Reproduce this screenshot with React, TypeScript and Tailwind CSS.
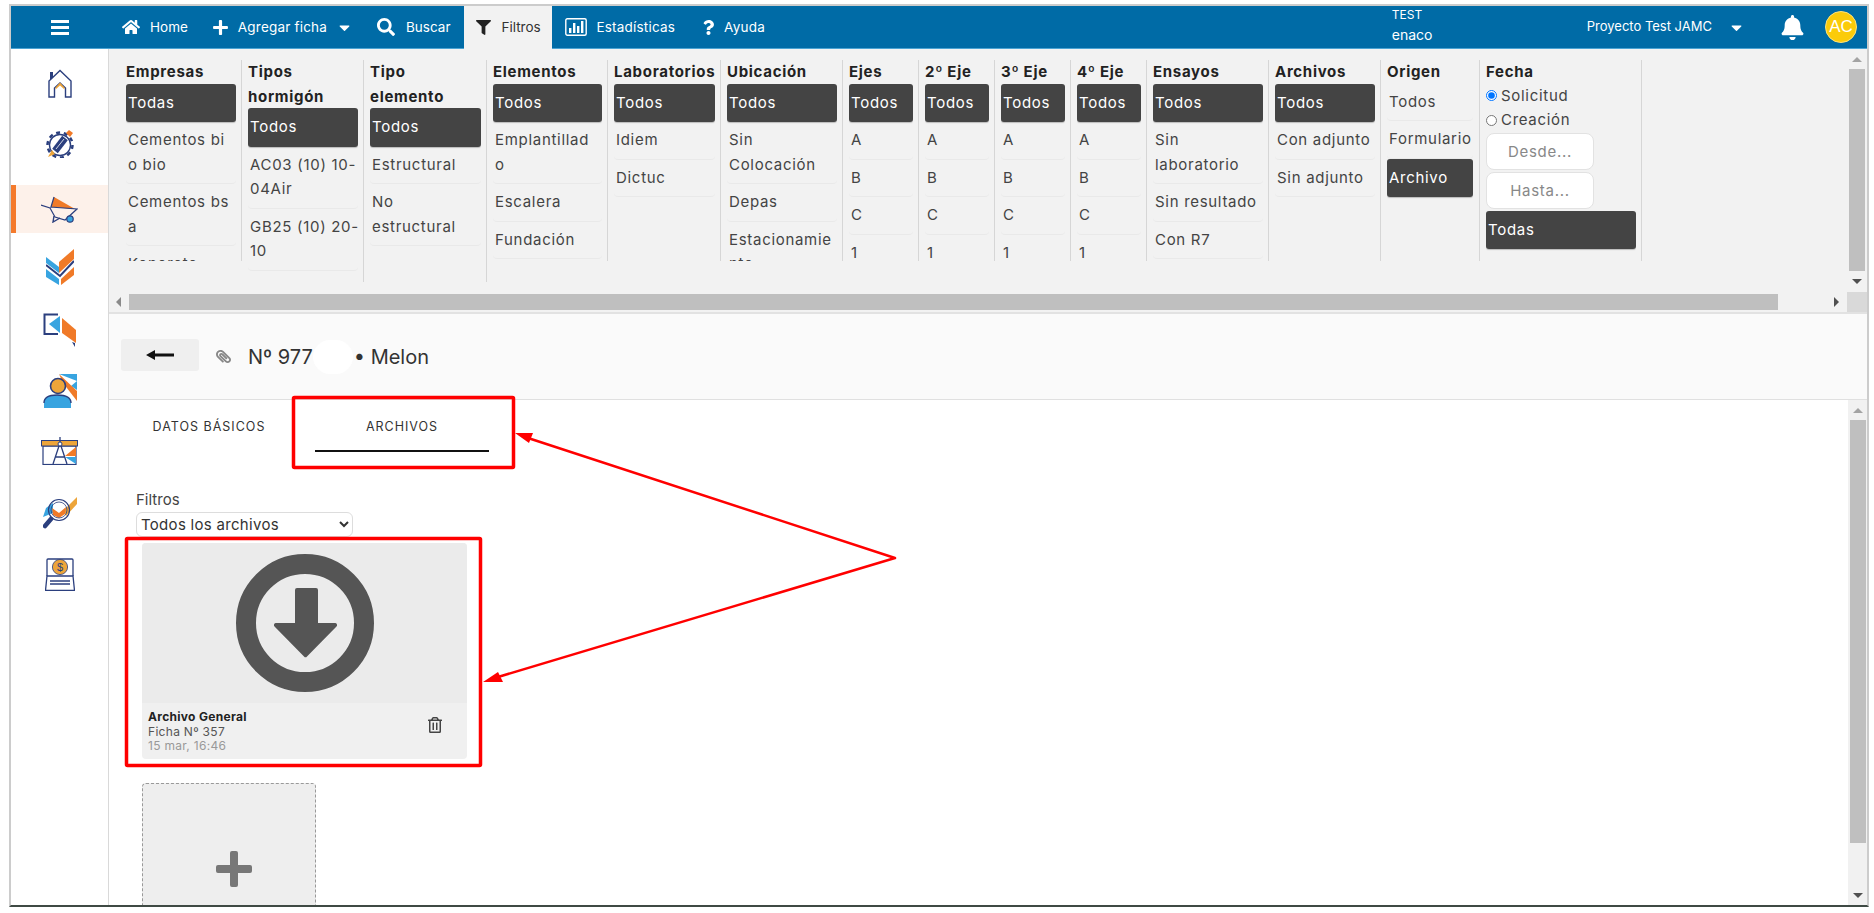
import {
  FaBell,
  FaCaretDown,
  FaFilter,
  FaHome,
  FaPaperclip,
  FaPlus,
  FaQuestion,
  FaRegTrashAlt,
  FaSearch,
} from "react-icons/fa";

const navy = "#2b3f7e";
const orange = "#f07a28";
const sky = "#38a4e0";
const amber = "#eda53a";

function HomeIcon() {
  return (
    <svg width="26" height="29" viewBox="0 0 26 29" fill="none">
      <rect x="3" y="3" width="3" height="7" fill={navy} />
      <path d="M2 28V12L13 1.5L24 12V28H18.5V19L13 14L7.5 19V28Z" stroke={navy} strokeWidth="1.4" fill="#fff" />
      <path d="M8.5 18.5L13 13.5L17.5 18.5V20.5L13 16.5L8.5 20.5Z" fill={amber} />
    </svg>
  );
}

function GearIcon() {
  return (
    <svg width="28" height="28" viewBox="0 0 28 28" fill="none">
      <circle cx="14" cy="15" r="10.5" stroke={navy} strokeWidth="1.4" />
      <circle cx="14" cy="15" r="12.5" stroke={navy} strokeWidth="2.5" strokeDasharray="4 3.8" />
      <path d="M9 21L19 8" stroke={navy} strokeWidth="7" />
      <path d="M10 19L18 9" stroke="#fff" strokeWidth="0.8" />
      <path d="M20 3L23 0L27 3L24 7Z" fill={orange} />
      <path d="M2 27L6 20L9 24Z" fill={amber} />
    </svg>
  );
}

function BarrowIcon() {
  return (
    <svg width="37" height="27" viewBox="0 0 37 27" fill="none">
      <path d="M13 1L34 13L10 11Z" fill={orange} />
      <path d="M0 9L9 12L14 21L24 24L36 13L10 11L13 1" stroke={navy} strokeWidth="1.2" />
      <path d="M13 20L12 26L19 22" stroke={navy} strokeWidth="1.4" />
      <circle cx="29" cy="23" r="3.2" fill={sky} stroke={navy} strokeWidth="1.2" />
    </svg>
  );
}

function ChevronsIcon() {
  return (
    <svg width="28" height="36" viewBox="0 0 28 36" fill="none">
      <path d="M0 8L13 18V24L0 14Z" fill={sky} />
      <path d="M13 13L28 0V10L13 24Z" fill={orange} />
      <path d="M0 16L14 27L28 12" stroke={navy} strokeWidth="2" />
      <path d="M0 20L13 30V36L0 28Z" fill={sky} />
      <path d="M15 30L28 18V26L15 36Z" fill={orange} />
    </svg>
  );
}

function ExportIcon() {
  return (
    <svg width="33" height="34" viewBox="0 0 33 34" fill="none">
      <path d="M15 1.5H1.5V21H15" stroke={navy} strokeWidth="2" />
      <path d="M6 11L17 3V20Z" fill={sky} />
      <path d="M19 5L33 17V30L19 20Z" fill={orange} />
      <path d="M29 29L32 30V34Z" fill={navy} />
    </svg>
  );
}

function PersonIcon() {
  return (
    <svg width="34" height="35" viewBox="0 0 34 35" fill="none">
      <path d="M16 1H34V8L28 13L34 17V8Z" fill={sky} />
      <path d="M16 1L34 18V28L20 10Z" fill={orange} />
      <circle cx="15" cy="13" r="7.5" fill={amber} stroke={navy} strokeWidth="1.6" />
      <path d="M1 35V30C1 24 6 22 14 22C22 22 28 24 28 30V35Z" fill={sky} />
      <path d="M1 30C1 24 6 22 14 22C22 22 28 24 28 30" stroke={navy} strokeWidth="1.4" />
    </svg>
  );
}

function DraftingIcon() {
  return (
    <svg width="37" height="28" viewBox="0 0 37 28" fill="none">
      <rect x="2" y="9" width="33" height="18.5" stroke={navy} strokeWidth="1.2" fill="#fff" />
      <path d="M35 10L24 19H35Z" fill={orange} />
      <path d="M24 20L35 27V20Z" fill={sky} />
      <rect x="0.5" y="3.5" width="36" height="5.5" fill={amber} stroke={navy} strokeWidth="1" />
      <path d="M19 0V7M19 6L12 27M19 6L26 27M14 20H24" stroke={navy} strokeWidth="1.3" />
      <circle cx="19" cy="7" r="2" fill="#fff" stroke={navy} />
    </svg>
  );
}

function InspectIcon() {
  return (
    <svg width="34" height="32" viewBox="0 0 34 32" fill="none">
      <path d="M0 20L3 11L10 6V16Z" fill={sky} />
      <path d="M21 13L34 0V7L23 19Z" fill={amber} />
      <path d="M9 11L16 16L23 10L22 17L16 21L10 18Z" fill={orange} />
      <circle cx="16" cy="13" r="10.5" stroke={navy} strokeWidth="1.2" />
      <circle cx="16" cy="13" r="8" stroke={navy} strokeWidth="0.8" />
      <path d="M8 22L2 29" stroke={navy} strokeWidth="4.5" strokeLinecap="round" />
    </svg>
  );
}

function InvoiceIcon() {
  return (
    <svg width="30" height="33" viewBox="0 0 30 33" fill="none">
      <path d="M2 18V2C2 1 3 1 3 1H27C28 1 28 2 28 2V18" stroke={navy} strokeWidth="1.3" />
      <circle cx="15" cy="9" r="7.6" fill={amber} stroke={navy} strokeWidth="0.8" />
      <text x="15" y="13" textAnchor="middle" fontSize="11" fill={navy} fontFamily="'Liberation Sans', sans-serif">
        $
      </text>
      <path d="M2 18H28L29.5 32.5H0.5Z" stroke={navy} strokeWidth="1.3" fill="#fff" />
      <path d="M5 23H25M5 26H25" stroke={navy} strokeWidth="1.4" />
    </svg>
  );
}

function ChartBoxIcon() {
  return (
    <svg width="22" height="18" viewBox="0 0 22 18" fill="none">
      <rect x="0.8" y="0.8" width="20.4" height="16.4" rx="1.5" stroke="#fff" strokeWidth="1.4" />
      <path d="M4 10h2.4v5H4zM8 5h2.4v10H8zM12 8h2.4v7H12zM16 3h2.4v12H16z" fill="#fff" />
    </svg>
  );
}

const sideItems = [
  { icon: <HomeIcon />, mt: "mt-[10px]", active: false },
  { icon: <GearIcon />, mt: "mt-[13px]", active: false },
  { icon: <BarrowIcon />, mt: "mt-[17px]", active: true },
  { icon: <ChevronsIcon />, mt: "mt-[10px]", active: false },
  { icon: <ExportIcon />, mt: "mt-[15px]", active: false },
  { icon: <PersonIcon />, mt: "mt-[12px]", active: false },
  { icon: <DraftingIcon />, mt: "mt-[13px]", active: false },
  { icon: <InspectIcon />, mt: "mt-[14px]", active: false },
  { icon: <InvoiceIcon />, mt: "mt-[13px]", active: false },
];

const eje = ["Todos", "A", "B", "C", "1"];

const columns = [
  { title: "Empresas", width: "w-[122px]", items: ["Todas", "Cementos bi\no bio", "Cementos bs\na", "Konorete"] },
  { title: "Tipos\nhormigón", width: "w-[122px]", items: ["Todos", "AC03 (10) 10-\n04Air", "GB25 (10) 20-\n10", "G025 (90)"] },
  { title: "Tipo\nelemento", width: "w-[123px]", items: ["Todos", "Estructural", "No\nestructural"] },
  { title: "Elementos", width: "w-[121px]", items: ["Todos", "Emplantillad\no", "Escalera", "Fundación"] },
  { title: "Laboratorios", width: "w-[113px]", items: ["Todos", "Idiem", "Dictuc"] },
  { title: "Ubicación", width: "w-[122px]", items: ["Todos", "Sin\nColocación", "Depas", "Estacionamie\nnto"] },
  { title: "Ejes", width: "w-[76px]", items: eje },
  { title: "2º Eje", width: "w-[76px]", items: eje },
  { title: "3º Eje", width: "w-[76px]", items: eje },
  { title: "4º Eje", width: "w-[76px]", items: eje },
  { title: "Ensayos", width: "w-[122px]", items: ["Todos", "Sin\nlaboratorio", "Sin resultado", "Con R7"] },
  { title: "Archivos", width: "w-[112px]", items: ["Todos", "Con adjunto", "Sin adjunto"] },
];

function FilterItem({ label, active }: { label: string; active: boolean }) {
  if (active) {
    return (
      <div className="bg-[#444444] text-white rounded-[3px] px-[2px] py-[7px] whitespace-pre shadow-[0_1px_1px_#bbb]">
        {label}
      </div>
    );
  }
  return <div className="px-[2px] py-[6px] whitespace-pre border-b border-[#e9e9e9] rounded-b-[4px]">{label}</div>;
}

function FilterColumn({ title, width, items }: { title: string; width: string; items: string[] }) {
  const tall = title.includes("\n");
  return (
    <div className={`${width} shrink-0 border-r border-[#d6d6d6] pl-[6px] pr-[5px]`}>
      <div className="font-bold text-[#222] whitespace-pre -mb-px">{title}</div>
      <div className={`overflow-hidden ${tall ? "h-[174px]" : "h-[177px]"}`}>
        {items.map((item, i) => (
          <FilterItem key={item} label={item} active={i === 0} />
        ))}
      </div>
    </div>
  );
}

function OrigenColumn() {
  return (
    <div className="w-[99px] shrink-0 border-r border-[#d6d6d6] pl-[6px] pr-[6px]">
      <div className="font-bold text-[#222] -mb-px">Origen</div>
      <div className="h-[177px] overflow-hidden">
        <FilterItem label="Todos" active={false} />
        <FilterItem label="Formulario" active={false} />
        <FilterItem label="Archivo" active={true} />
      </div>
    </div>
  );
}

function FechaColumn() {
  return (
    <div className="w-[162px] shrink-0 border-r border-[#d6d6d6] pl-[6px] pr-[5px]">
      <div className="font-bold text-[#222] -mb-px">Fecha</div>
      <div className="h-[177px] overflow-hidden">
        <label className="flex items-center gap-[4px]">
          <input type="radio" name="fecha" defaultChecked className="w-[11px] h-[11px] m-0" />
          Solicitud
        </label>
        <label className="flex items-center gap-[4px]">
          <input type="radio" name="fecha" className="w-[11px] h-[11px] m-0" />
          Creación
        </label>
        <input
          placeholder="Desde..."
          className="block w-[108px] h-[37px] bg-white rounded-lg border border-[#e2e2e2] text-center placeholder:text-[#888] mb-[2px]"
        />
        <input
          placeholder="Hasta..."
          className="block w-[108px] h-[37px] bg-white rounded-lg border border-[#e2e2e2] text-center placeholder:text-[#888] mb-[2px]"
        />
        <FilterItem label="Todas" active={true} />
      </div>
    </div>
  );
}

function ArrowUp({ color }: { color: string }) {
  return <div className={`w-0 h-0 border-x-[5px] border-x-transparent border-b-[5px] ${color}`} />;
}

function ArrowDown() {
  return <div className="w-0 h-0 border-x-[5px] border-x-transparent border-t-[5px] border-t-[#505050]" />;
}

function Nav() {
  return (
    <header className="h-[43px] shrink-0 bg-[#006ba6] border-b border-[#4ba3d3] flex items-stretch text-white text-[13.500px]">
      <div className="w-[98px] shrink-0 flex flex-col items-center justify-center gap-[3px]">
        <span className="w-[18px] h-[3px] bg-white" />
        <span className="w-[18px] h-[3px] bg-white" />
        <span className="w-[18px] h-[3px] bg-white" />
      </div>
      <div className="ml-[13px] flex items-center gap-[10px]">
        <FaHome className="text-[18px]" />
        <span>Home</span>
      </div>
      <div className="ml-[24px] flex items-center gap-[9px]">
        <FaPlus className="text-[17px]" />
        <span className="tracking-[0.2px]">Agregar ficha</span>
        <FaCaretDown className="text-[17px]" />
      </div>
      <div className="ml-[24px] flex items-center gap-[11px]">
        <FaSearch className="text-[18px]" />
        <span>Buscar</span>
      </div>
      <div className="ml-[14px] w-[88px] bg-[#f2f2f2] text-[#333] flex items-center pl-[12px] gap-[10px] -mb-px">
        <FaFilter className="text-[15px] text-[#222]" />
        <span>Filtros</span>
      </div>
      <div className="ml-[13px] flex items-center gap-[9px]">
        <ChartBoxIcon />
        <span className="tracking-[0.2px]">Estadísticas</span>
      </div>
      <div className="ml-[26px] flex items-center gap-[8px]">
        <FaQuestion className="text-[15px]" />
        <span className="tracking-[0.2px]">Ayuda</span>
      </div>
      <div className="ml-auto flex items-center pr-[10px]">
        <div className="leading-[20px] -mt-[4px] w-[195px]">
          <div className="text-[12px]">TEST</div>
          <div className="text-[14px]">enaco</div>
        </div>
        <span className="text-[13px]">Proyecto Test JAMC</span>
        <FaCaretDown className="ml-[16px] text-[17px]" />
        <FaBell className="ml-[35px] text-[25px]" />
        <div className="ml-[20px] w-[32px] h-[32px] rounded-full bg-[#fbcb0a] border border-[#ffe27a] flex items-center justify-center text-[17px] font-['Liberation_Sans',sans-serif]">
          AC
        </div>
      </div>
    </header>
  );
}

function Sidebar() {
  return (
    <aside className="w-[98px] shrink-0 border-r border-[#d9d9d9] bg-white">
      {sideItems.map((item, i) => (
        <div
          key={i}
          className={`h-[48px] flex items-center justify-center ${item.mt} ${
            item.active ? "bg-[#fdf1ea] border-l-[5px] border-[#f47a2c] pr-[5px]" : ""
          }`}
        >
          {item.icon}
        </div>
      ))}
    </aside>
  );
}

function FilterPanel() {
  return (
    <section className="shrink-0 bg-[#f2f2f2] border-b-2 border-[#e2e2e2] text-[15px] tracking-[0.7px] leading-[24.500px] text-[#444]">
      <div className="flex h-[243px]">
        <div className="flex-1 min-w-0 flex items-start pt-[11px] pl-[11px] overflow-hidden">
          {columns.map((col) => (
            <FilterColumn key={col.title} {...col} />
          ))}
          <OrigenColumn />
          <FechaColumn />
        </div>
        <div className="w-[20px] shrink-0 flex flex-col items-center">
          <div className="h-[20px] flex items-center">
            <ArrowUp color="border-b-[#a3a3a3]" />
          </div>
          <div className="w-[16px] h-[202px] bg-[#bfbfbf]" />
          <div className="flex-1 flex items-center">
            <ArrowDown />
          </div>
        </div>
      </div>
      <div className="flex h-[20px]">
        <div className="w-[20px] shrink-0 flex items-center pl-[7px]">
          <div className="w-0 h-0 border-y-[5px] border-y-transparent border-r-[5px] border-r-[#8a8a8a]" />
        </div>
        <div className="w-[1649px] my-[2px] bg-[#bfbfbf]" />
        <div className="flex-1 flex items-center justify-end pr-[8px]">
          <div className="w-0 h-0 border-y-[5px] border-y-transparent border-l-[5px] border-l-[#505050]" />
        </div>
        <div className="w-[20px] shrink-0 bg-[#d9d9d9]" />
      </div>
    </section>
  );
}

function TitleBar() {
  return (
    <div className="h-[86px] shrink-0 bg-[#fafafa] border-b border-[#e0e0e0] flex items-center pl-[12px] text-[20px] text-[#333]">
      <button className="w-[78px] h-[32px] bg-[#efefef] rounded-[3px] flex items-center justify-center -mt-[4px]">
        <svg width="28" height="10" viewBox="0 0 28 10">
          <path d="M0 5L9 0V3.5H28V6.5H9V10Z" fill="#111" />
        </svg>
      </button>
      <FaPaperclip className="ml-[17px] text-[15px] text-[#888] rotate-90 -mt-[1px]" />
      <span className="ml-[17px]">Nº 977</span>
      <span className="w-[40px] h-[34px] rounded-full bg-white" />
      <span className="ml-[1px]">• Melon</span>
    </div>
  );
}

function DownloadGlyph() {
  return (
    <svg width="140" height="140" viewBox="0 0 140 140">
      <circle cx="70" cy="70" r="59" fill="none" stroke="#555555" strokeWidth="20" />
      <path d="M60 37a2 2 0 0 1 2-2h19a2 2 0 0 1 2 2v33h17a2 2 0 0 1 1.5 3.4L72 103.500a2 2 0 0 1-3 0L39.500 73.400A2 2 0 0 1 41 70h19Z" fill="#555555" />
    </svg>
  );
}

function Body() {
  return (
    <div className="flex-1 min-h-0 flex bg-white">
      <div className="flex-1 min-w-0 overflow-hidden">
        <div className="flex pl-[13px] gap-[19px] text-[12.500px] tracking-[1px] text-[#333]">
          <div className="w-[174px] h-[52px] pt-[18px] text-center">DATOS BÁSICOS</div>
          <div className="w-[174px] h-[52px] pt-[18px] text-center border-b-2 border-[#111]">ARCHIVOS</div>
        </div>
        <div className="pl-[27px] mt-[36px] text-[15px] leading-[24px] text-[#444]">Filtros</div>
        <select className="block ml-[27px] w-[217px] h-[25px] rounded-md border border-[#ddd] bg-white text-[15px] tracking-[0.3px] text-[#333]">
          <option>Todos los archivos</option>
        </select>
        <div className="ml-[33px] mt-[6px] w-[325px] rounded-[4px] overflow-hidden bg-[#f0f0f0]">
          <div className="h-[160px] bg-[#ebebeb] flex items-center justify-center">
            <DownloadGlyph />
          </div>
          <div className="h-[56px] pl-[6px] pr-[24px] pt-[7px] flex justify-between">
            <div className="text-[12px] tracking-[0.3px] leading-[14.500px]">
              <div className="font-bold text-[#222]">Archivo General</div>
              <div className="text-[#555]">Ficha Nº 357</div>
              <div className="text-[#999]">15 mar, 16:46</div>
            </div>
            <FaRegTrashAlt className="text-[16px] text-[#444] mt-[7px]" />
          </div>
        </div>
        <div className="ml-[33px] mt-[24px] w-[174px] h-[172px] rounded-[4px] border border-dashed border-[#999] bg-[#eeeeee] flex items-center justify-center pl-[9px]">
          <svg width="36" height="36" viewBox="0 0 36 36">
            <path d="M14 2a2 2 0 0 1 2-2h4a2 2 0 0 1 2 2v12h12a2 2 0 0 1 2 2v4a2 2 0 0 1-2 2H22v12a2 2 0 0 1-2 2h-4a2 2 0 0 1-2-2V22H2a2 2 0 0 1-2-2v-4a2 2 0 0 1 2-2h12Z" fill="#777777" />
          </svg>
        </div>
      </div>
      <div className="w-[19px] shrink-0 bg-[#f1f1f1] flex flex-col items-center">
        <div className="h-[20px] flex items-center">
          <ArrowUp color="border-b-[#a3a3a3]" />
        </div>
        <div className="w-[16px] h-[423px] bg-[#bfbfbf]" />
        <div className="flex-1 flex items-end pb-[7px]">
          <ArrowDown />
        </div>
      </div>
    </div>
  );
}

// las marcas rojas van encima de la captura
function Annotations() {
  return (
    <svg className="absolute inset-0 pointer-events-none" width="1874" height="913" fill="none">
      <rect x="293.500" y="397.500" width="220" height="70" stroke="#ff0000" strokeWidth="3.500" rx="1" />
      <rect x="126.500" y="538.500" width="354" height="227" stroke="#ff0000" strokeWidth="3.500" rx="1" />
      <path d="M895 558L528 438M895 558L498 677" stroke="#ff0000" strokeWidth="2.500" strokeLinecap="round" />
      <path d="M515 433L533 433L529 443Z" fill="#ff0000" />
      <path d="M483 682L498 672L503 682Z" fill="#ff0000" />
    </svg>
  );
}

export default function App() {
  return (
    <div className="relative h-[913px] bg-white overflow-hidden font-['Inter','Noto_Sans',sans-serif]">
      <div className="ml-[9px] mr-[5px] mt-[4px] h-[903px] border-2 border-[#cccccc] border-b-[#3f4a44] flex flex-col">
        <Nav />
        <div className="flex-1 min-h-0 flex">
          <Sidebar />
          <main className="flex-1 min-w-0 flex flex-col">
            <FilterPanel />
            <TitleBar />
            <Body />
          </main>
        </div>
      </div>
      <Annotations />
    </div>
  );
}
